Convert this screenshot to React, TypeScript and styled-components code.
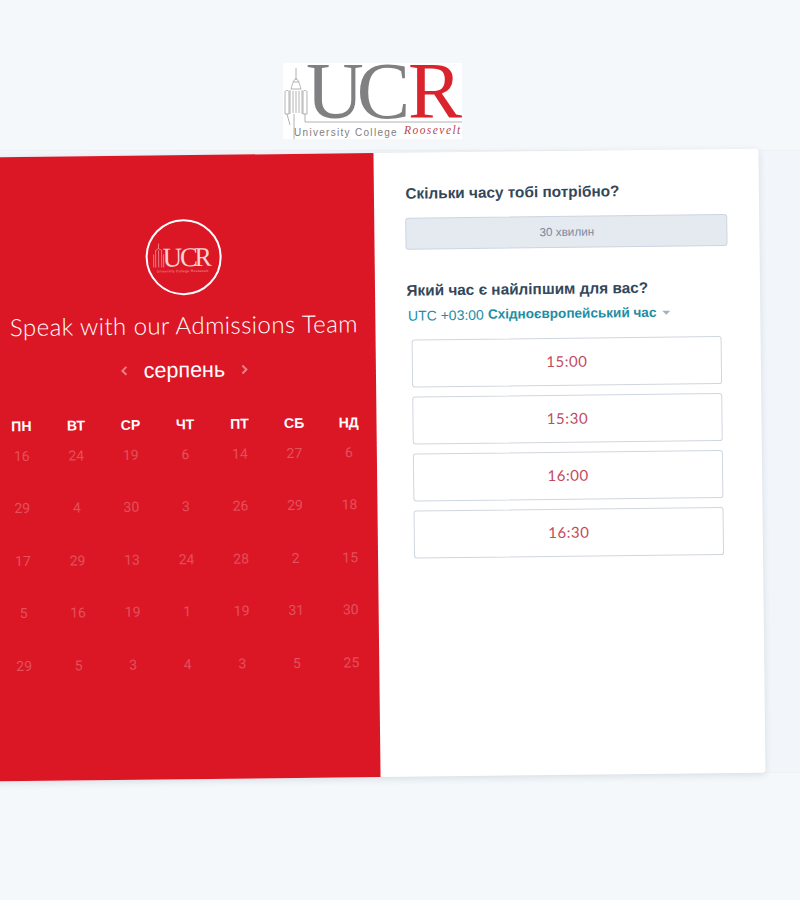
import React from "react";
import styled, { createGlobalStyle } from "styled-components";

const Global = createGlobalStyle`
  html, body { margin: 0; padding: 0; height: 900px; overflow: hidden; background: #f4f8fb; }
  * { box-sizing: border-box; }
`;

const Page = styled.div`
  width: 800px;
  height: 900px;
  overflow: hidden;
  padding-top: 63px;
  font-family: "Liberation Sans", Arial, sans-serif;
`;

const LogoFrame = styled.div`
  width: 179px;
  height: 76px;
  margin-left: 283px;
  background: #fff;
`;

const Band = styled.div`
  margin-top: 11px;
  height: 623px;
  padding-top: 3px;
  background: #f2f6fb;
  border-top: 1px solid #eef1f4;
  border-bottom: 1px solid #eef2f5;
`;

const Card = styled.div`
  display: flex;
  width: 770px;
  height: 624px;
  margin-left: -8px;
  margin-top: -1px;
  transform: rotate(-0.65deg);
  background: #fff;
  border-radius: 3px;
  box-shadow: 0 2px 7px rgba(45, 62, 80, 0.14);
`;

const RedPanel = styled.section`
  width: 385.3px;
  flex: none;
  padding: 64px 0.9px 0 2.6px;
  display: flex;
  flex-direction: column;
  align-items: center;
  background: #db1726;
  color: #fff;
`;

const Circle = styled.div`
  width: 76px;
  height: 76px;
  flex: none;
  border: 2.5px solid #fff;
  border-radius: 50%;
  display: flex;
  align-items: center;
  justify-content: center;
`;

const Title = styled.h1`
  margin: 14.5px 0 0;
  font: 300 24px/30px Lato, "Open Sans", sans-serif;
  letter-spacing: 0.42px;
  white-space: nowrap;
`;

const MonthRow = styled.div`
  margin-top: 17px;
  display: flex;
  align-items: center;
  gap: 15px;
  height: 26px;
`;

const MonthName = styled.span`
  font-size: 21.5px;
  line-height: 26px;
`;

const Chevron = styled.svg`
  width: 9px;
  height: 12px;
  opacity: 0.45;
`;

const Calendar = styled.div`
  margin-top: 31px;
  width: 100%;
  display: grid;
  grid-template-columns: repeat(7, 1fr);
  grid-template-rows: 20px;
  grid-auto-rows: 52.67px;
  text-align: center;
`;

const Weekday = styled.div`
  font-size: 14px;
  font-weight: 700;
  line-height: 20px;
`;

const DayCell = styled.div`
  font: 400 14px/40px Roboto, sans-serif;
  color: rgba(255, 255, 255, 0.25);
`;

const WhitePanel = styled.section`
  flex: 1;
  padding: 29.5px 31px 0 31.2px;
`;

const Question = styled.h2<{ $gap: number }>`
  margin: ${(p) => p.$gap}px 0 0;
  font-size: 15.35px;
  line-height: 22px;
  font-weight: 700;
  color: #33475b;
  white-space: nowrap;
`;

const Duration = styled.div`
  margin-top: 13.5px;
  width: 322px;
  height: 32px;
  padding-bottom: 1px;
  display: flex;
  align-items: center;
  justify-content: center;
  background: #e5e9f0;
  border: 1px solid #cbd6e2;
  border-radius: 3px;
  font-size: 11.7px;
  color: #7a899e;
`;

const Zone = styled.div`
  margin-top: 4px;
  padding-left: 1.2px;
  display: flex;
  align-items: center;
  height: 20px;
  font-size: 14px;
  color: #1b8ea6;
  white-space: nowrap;
`;

const ZoneName = styled.b`
  margin-left: 4px;
  font-size: 13.55px;
  font-weight: 700;
`;

const Caret = styled.i`
  margin-left: 6px;
  margin-top: 1px;
  border-style: solid;
  border-width: 4px 4px 0;
  border-color: #a3b1c0 transparent transparent;
`;

const Slots = styled.div`
  margin: 14.2px 0 0 4.5px;
  width: 310px;
  display: flex;
  flex-direction: column;
  gap: 9px;
`;

const Slot = styled.button`
  height: 48px;
  padding: 0 0 2px;
  background: #fff;
  border: 1px solid #d0d6de;
  border-radius: 3px;
  font: 400 15px Lato, sans-serif;
  letter-spacing: 0.55px;
  color: #c24a5b;
`;

const days = [
  [16, 24, 19, 6, 14, 27, 6],
  [29, 4, 30, 3, 26, 29, 18],
  [17, 29, 13, 24, 28, 2, 15],
  [5, 16, 19, 1, 19, 31, 30],
  [29, 5, 3, 4, 3, 5, 25],
];
const weekdays = ["ПН", "ВТ", "СР", "ЧТ", "ПТ", "СБ", "НД"];
const times = ["15:00", "15:30", "16:00", "16:30"];

const MainLogo = () => (
  <svg width="179" height="76" viewBox="0 0 179 76" overflow="visible">
    <g fill="none" stroke="#a9a9ab" strokeWidth="0.9">
      <path d="M13 5v12M10 19l3-4 3 4M8 26c1-3 2-7 2-7h6s1 4 2 7M8 26h10M7 27v24M19 27v24M10 28v22M13 28v22M16 28v22" />
      <path d="M2 29c0-2 4-2 4 0v22H2zM20 29c0-2 4-2 4 0v22h-4z" />
      <path d="M4 51l3 11M22 51v8h157M11 51v25" />
    </g>
    <text x="23" y="55" fontFamily="'Liberation Serif', serif" fontSize="80" letterSpacing="-7" fill="#808083">UC</text>
    <text x="125" y="55" fontFamily="'Liberation Serif', serif" fontSize="80" fill="#d9232d" textLength="54" lengthAdjust="spacingAndGlyphs">R</text>
    <text x="11" y="72.5" fontFamily="'Liberation Sans', sans-serif" fontSize="10" letterSpacing="1.3" fill="#7e7e82">University College</text>
    <text x="121" y="71" fontFamily="'Liberation Serif', serif" fontStyle="italic" fontSize="11.5" letterSpacing="1.45" fill="#b5474e">Roosevelt</text>
  </svg>
);

const RoundLogo = () => (
  <svg width="62" height="40" viewBox="0 0 62 40" overflow="visible">
    <g fill="none" stroke="#f0a6ac" strokeWidth="0.7">
      <path d="M6 6v5M3 13l3-2 3 2M3 13v17M9 13v17M6 13v17M1 17v13M11 17v13" />
    </g>
    <text x="10" y="29" fontFamily="'Liberation Serif', serif" fontSize="27" letterSpacing="-2.2" fill="#f6d3d5">UC</text>
    <text x="42" y="29" fontFamily="'Liberation Serif', serif" fontSize="27" fill="#f6d3d5" textLength="17" lengthAdjust="spacingAndGlyphs">R</text>
    <text x="4" y="35" fontFamily="'Liberation Sans', sans-serif" fontSize="3.4" letterSpacing="0.3" fill="#f3a9ae">University College Roosevelt</text>
  </svg>
);

export default function App() {
  return (
    <Page>
      <Global />
      <LogoFrame>
        <MainLogo />
      </LogoFrame>
      <Band>
        <Card>
          <RedPanel>
            <Circle>
              <RoundLogo />
            </Circle>
            <Title>Speak with our Admissions Team</Title>
            <MonthRow>
              <Chevron viewBox="0 0 9 12">
                <path d="M6.5 2L2.5 6l4 4" fill="none" stroke="#fff" strokeWidth="2" />
              </Chevron>
              <MonthName>серпень</MonthName>
              <Chevron viewBox="0 0 9 12">
                <path d="M2.5 2l4 4-4 4" fill="none" stroke="#fff" strokeWidth="2" />
              </Chevron>
            </MonthRow>
            <Calendar>
              {weekdays.map((d) => (
                <Weekday key={d}>{d}</Weekday>
              ))}
              {days.flat().map((d, i) => (
                <DayCell key={i}>{d}</DayCell>
              ))}
            </Calendar>
          </RedPanel>
          <WhitePanel>
            <Question $gap={0}>Скільки часу тобі потрібно?</Question>
            <Duration>30 хвилин</Duration>
            <Question $gap={29.7}>Який час є найліпшим для вас?</Question>
            <Zone>
              UTC +03:00
              <ZoneName>Східноєвропейський час</ZoneName>
              <Caret />
            </Zone>
            <Slots>
              {times.map((t) => (
                <Slot key={t}>{t}</Slot>
              ))}
            </Slots>
          </WhitePanel>
        </Card>
      </Band>
    </Page>
  );
}
